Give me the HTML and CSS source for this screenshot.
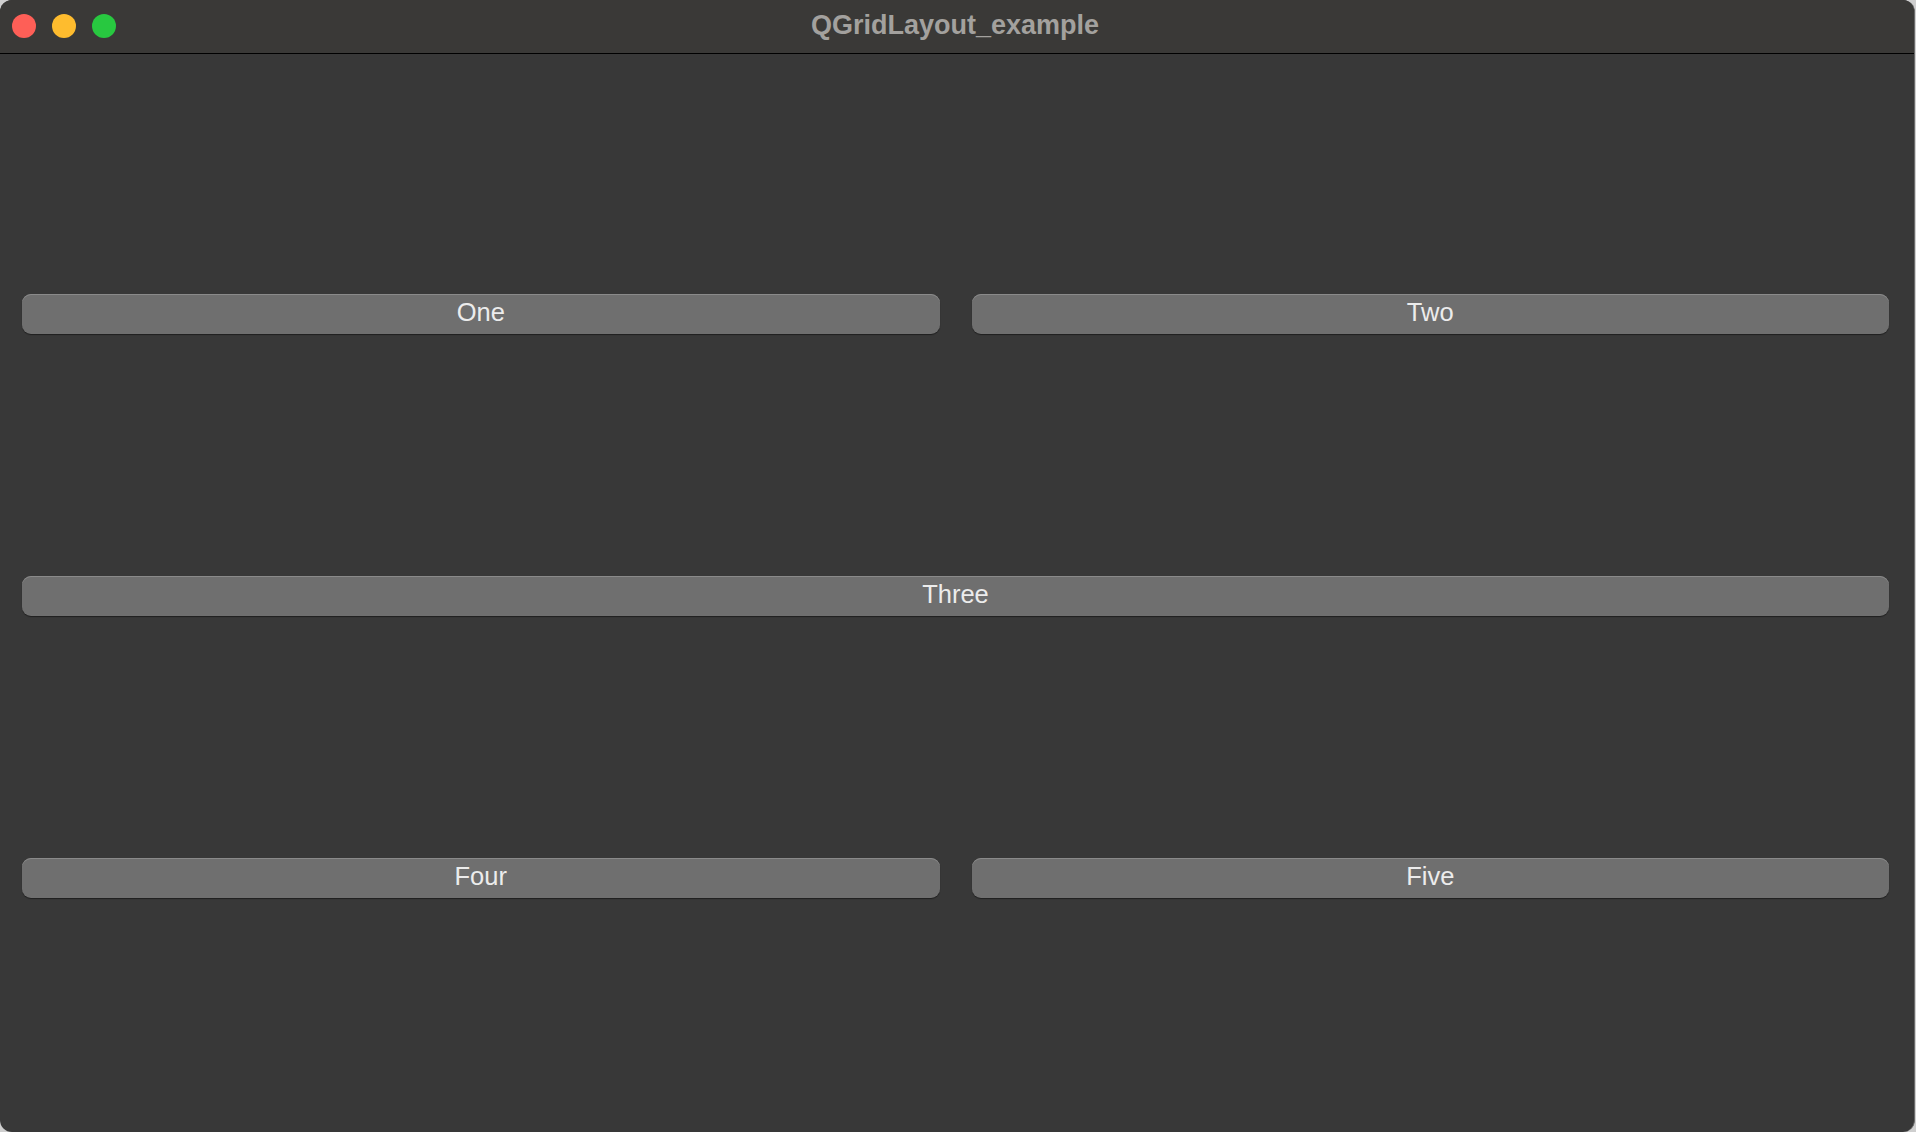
FILE: index.html
```html
<!DOCTYPE html>
<html>
<head>
<meta charset="utf-8">
<title>QGridLayout_example</title>
<link rel="stylesheet" href="styles.css">
</head>
<body>
<div class="window">
  <div class="titlebar">
    <div class="lights">
      <span class="light red"></span>
      <span class="light yellow"></span>
      <span class="light green"></span>
    </div>
    <div class="title">QGridLayout_example</div>
  </div>
  <div class="content">
    <div class="grid">
      <button class="btn">One</button>
      <button class="btn">Two</button>
      <button class="btn wide">Three</button>
      <button class="btn">Four</button>
      <button class="btn">Five</button>
    </div>
  </div>
</div>
</body>
</html>
```

FILE: styles.css
```css
html, body {
  margin: 0;
  padding: 0;
  width: 1916px;
  height: 1132px;
  background: #cfcfcf;
  overflow: hidden;
}

.window {
  width: 1915px;
  height: 1132px;
  box-sizing: border-box;
  border-radius: 12px;
  overflow: hidden;
  background: #383838;
  border-right: 1px solid #6a6a6a;
  display: flex;
  flex-direction: column;
  font-family: "Liberation Sans", Arial, sans-serif;
}

.titlebar {
  position: relative;
  height: 53px;
  flex: 0 0 53px;
  background: #3a3937;
  border-bottom: 1px solid #000;
  display: flex;
  align-items: center;
  justify-content: center;
}

.lights {
  position: absolute;
  left: 12px;
  top: 14px;
  display: flex;
  gap: 16px;
}

.light {
  width: 24px;
  height: 24px;
  border-radius: 50%;
  display: block;
}
.red { background: #fe5f57; }
.yellow { background: #febc2e; }
.green { background: #28c840; }

.title {
  color: #a3a19e;
  font-weight: bold;
  font-size: 27px;
  margin-left: -4px;
  margin-top: -2px;
}

.content {
  flex: 1;
  padding: 240px 25px 0 22px;
}

.grid {
  display: grid;
  grid-template-columns: 1fr 1fr;
  column-gap: 32px;
  row-gap: 242px;
}

.btn {
  height: 40px;
  margin: 0;
  padding: 0 0 3px 0;
  border: none;
  border-radius: 9px;
  background: #6f6f6f;
  box-shadow: inset 0 1px 0 #8a8a8a, 0 1px 1px rgba(0,0,0,0.45);
  color: #ececec;
  font-family: "Liberation Sans", Arial, sans-serif;
  font-size: 25.5px;
  line-height: 37px;
}

.wide {
  grid-column: 1 / 3;
}
```
